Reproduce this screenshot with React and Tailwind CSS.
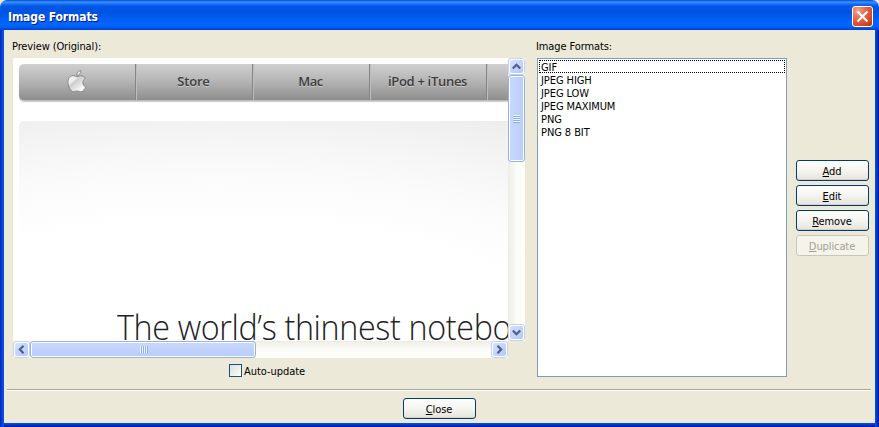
import React from "react";

const ui = "font-['DejaVu_Sans_Condensed','DejaVu_Sans',sans-serif] [font-stretch:condensed]";

function Chevron({ className = "" }) {
  return (
    <svg viewBox="0 0 9 9" className={`h-[9px] w-[9px] ${className}`} fill="none" stroke="#4d6185" strokeWidth="2.2">
      <path d="M0.8 6.5 L4.5 2.8 L8.2 6.5" />
    </svg>
  );
}

function ArrowButton({ turn }) {
  return (
    <div className="h-[17px] w-[17px] shrink-0 rounded-[3px] border border-[#c3d3f5] bg-white p-px">
      <div className="flex h-full w-full items-center justify-center rounded-[2px] bg-linear-to-br from-[#d4e0fe] to-[#b3c8f9]">
        <Chevron className={turn} />
      </div>
    </div>
  );
}

function PushButton({ first, rest, disabled }) {
  return (
    <button
      className={`flex h-[21px] w-[73px] items-center justify-center rounded-[3px] border pt-[2px] pr-px text-[11px] leading-[13px] ${
        disabled
          ? "border-[#c9c7ba] bg-[#f5f4ea] text-[#a1a192]"
          : "border-[#003c74] bg-linear-to-b from-white via-[#f5f4ef] to-[#e6e3db] text-black shadow-[inset_0_-1px_0_#d6d0c5]"
      }`}
    >
      <span className="tracking-[-0.1px] whitespace-nowrap">
        <span className="underline underline-offset-1">{first}</span>
        {rest}
      </span>
    </button>
  );
}

function AppleMark() {
  return (
    <svg width="20" height="24" viewBox="0 0 20 24">
      <defs>
        <linearGradient id="mark" x1="0" y1="0" x2="0.7" y2="1">
          <stop offset="0" stopColor="#ffffff" />
          <stop offset="0.46" stopColor="#ececec" />
          <stop offset="0.54" stopColor="#cdcdcd" />
          <stop offset="1" stopColor="#ffffff" />
        </linearGradient>
      </defs>
      <path
        d="M10.2 6.9 C9 6.8 8 5.7 6 5.7 C3 5.7 1 8.4 1 12.2 C1 16.4 3.7 21.7 6.4 21.7 C7.8 21.7 8.5 20.9 10 20.9 C11.5 20.9 12.1 21.7 13.7 21.7 C15.8 21.7 17.9 18.9 18.6 16.9 C16.8 16.1 15.9 14.7 15.9 12.6 C15.9 10.8 16.7 9.4 18.2 8.5 C17.2 6.7 15.6 5.7 13.8 5.7 C12.2 5.7 11.2 6.8 10.2 6.9 Z M9.8 5.4 C9.6 3 11.4 0.9 13.8 0.5 C14.2 3 12.2 5.4 9.8 5.4 Z"
        fill="url(#mark)"
        stroke="#6f6f6f"
        strokeWidth="0.7"
      />
    </svg>
  );
}

const cell =
  "flex h-full w-[117px] shrink-0 items-center justify-center border-r border-[#858585] shadow-[1px_0_0_#bdbdbd] pr-px pb-px text-[13px] font-semibold whitespace-nowrap text-[#3e3e3e] [text-shadow:0_1px_0_#c9c9c9] font-['Open_Sans',sans-serif] [font-stretch:normal]";

function Preview() {
  return (
    <div className="h-[283px] w-[495px] overflow-hidden bg-white pt-[6px] pl-[6px]">
      <div className="flex h-[37px] w-[600px] rounded-[5px] border-b border-[#bbb] bg-linear-to-b from-[#d0d0d0] via-[#b3b3b3] to-[#8e8e8e] shadow-[0_1px_1px_#ccc]">
        <div className={cell}>
          <AppleMark />
        </div>
        <div className={cell}><span className="tracking-[-0.2px]">Store</span></div>
        <div className={cell}><span className="tracking-[-0.5px]">Mac</span></div>
        <div className={cell}><span className="tracking-[-0.3px]">iPod + iTunes</span></div>
      </div>
      <div className="mt-[20px] h-[230px] w-[800px] rounded-tl-[5px] bg-[radial-gradient(ellipse_600px_230px_at_200px_230px,#ffffff_57%,#fbfbfb_76%,#f7f7f7_88%,#f1f1f1_102%,#ececec_114%)] pt-[183px] pl-[98px]">
        <div className="origin-left scale-x-[0.95] text-[34px] leading-[46px] font-light tracking-[-0.37px] whitespace-nowrap text-[#222] font-['Open_Sans',sans-serif] [font-stretch:normal]">
          The world’s thinnest notebo
        </div>
      </div>
    </div>
  );
}

const formats = ["GIF", "JPEG HIGH", "JPEG LOW", "JPEG MAXIMUM", "PNG", "PNG 8 BIT"];

export default function App() {
  return (
    <div className="h-[427px] w-[879px] bg-[#ece9d8]">
      <div className={`flex h-[427px] w-[879px] flex-col overflow-hidden rounded-t-[7px] bg-[#ece9d8] text-[11px] leading-[13px] text-black ${ui}`}>
        <div className="flex h-[30px] shrink-0 items-center justify-between bg-[linear-gradient(#0049d4_0px,#3c91ff_2px,#1b71f5_4px,#0058e8_6px,#0053e0_12px,#005ef5_19px,#0067ff_25px,#0060f8_27px,#003dd0_30px)] pt-[3px] pr-[6px] pl-[8px]">
          <div className="pt-[2px] text-[12px] leading-[15px] font-bold tracking-[-0.1px] whitespace-nowrap text-white [text-shadow:1px_1px_0_#0a1883]">Image Formats</div>
          <div className="flex h-[21px] w-[21px] items-center justify-center rounded-[3px] border border-white bg-[radial-gradient(circle_at_25%_20%,#f0a18c,#e5674a_40%,#d8431c_75%,#b93408)]">
            <svg width="13" height="13" viewBox="0 0 13 13" stroke="white" strokeWidth="2.2" fill="none">
              <path d="M1.5 1.5 L11.5 11.5 M11.5 1.5 L1.5 11.5" />
            </svg>
          </div>
        </div>

        <div className="flex h-[397px] w-full">
          <div className="w-[4px] shrink-0 bg-linear-to-r from-[#0016b0] via-[#0046e0] to-[#0855dd]" />
          <div className="flex w-[871px] shrink-0 flex-col">
            <div className="flex h-[359px] shrink-0 pl-[9px]">
              <div className="w-[512px] shrink-0">
                <div className="flex h-[28px] items-end pb-[5px] pl-0"><span className="-ml-px tracking-[-0.12px]">Preview (Original):</span></div>
                <div className="flex">
                  <Preview />
                  <div className="flex h-[283px] w-[17px] flex-col bg-linear-to-r from-[#eeede5] via-[#fbfbf8] to-[#fefefb]">
                    <ArrowButton turn="" />
                    <div className="flex h-[87px] w-[17px] flex-col items-center justify-center gap-px rounded-[3px] border border-[#98b3e8] bg-linear-to-r from-[#c9d8fc] to-[#b9cdfb] shadow-[inset_0_0_0_1px_white]">
                      {[0, 1, 2, 3].map((i) => (
                        <div key={i} className="h-px w-[7px] bg-[#eef4fe] shadow-[0_1px_0_#8cb0f8]" />
                      ))}
                    </div>
                    <div className="grow" />
                    <ArrowButton turn="rotate-180" />
                  </div>
                </div>
                <div className="flex h-[17px] w-[495px] bg-linear-to-b from-[#eeede5] via-[#fbfbf8] to-[#fefefb]">
                  <ArrowButton turn="-rotate-90" />
                  <div className="flex h-[17px] w-[226px] items-center justify-center gap-px rounded-[3px] border border-[#98b3e8] bg-linear-to-b from-[#c9d8fc] to-[#b9cdfb] shadow-[inset_0_0_0_1px_white]">
                    {[0, 1, 2, 3].map((i) => (
                      <div key={i} className="h-[7px] w-px bg-[#eef4fe] shadow-[1px_0_0_#8cb0f8]" />
                    ))}
                  </div>
                  <div className="grow" />
                  <ArrowButton turn="rotate-90" />
                </div>
                <div className="flex items-start gap-[3px] pt-[6px] pl-[216px]">
                  <div className="h-[13px] w-[13px] border border-[#1c5180] bg-linear-to-br from-[#dcdcd7] to-white" />
                  <span className="-ml-px pt-px tracking-[-0.05px]">Auto-update</span>
                </div>
              </div>

              <div className="ml-[12px] w-[250px] shrink-0">
                <div className="flex h-[28px] items-end pb-[5px]"><span className="-ml-px tracking-[-0.1px]">Image Formats:</span></div>
                <div className="h-[319px] w-[250px] border border-[#7f9db9] bg-white p-px">
                  {formats.map((f, i) => (
                    <div
                      key={f}
                      className={`flex h-[13px] items-center pt-[2px] pl-[2px] whitespace-nowrap tracking-[-0.08px] ${
                        i === 0 ? "outline-1 -outline-offset-1 outline-dotted outline-black" : ""
                      }`}
                    >
                      {f}
                    </div>
                  ))}
                </div>
              </div>

              <div className="ml-[9px] flex flex-col gap-[4px] pt-[130px]">
                <PushButton first="A" rest="dd" />
                <PushButton first="E" rest="dit" />
                <PushButton first="R" rest="emove" />
                <PushButton first="D" rest="uplicate" disabled />
              </div>
            </div>
            <div className="mr-[4px] ml-[3px] h-[2px] border-t border-b border-t-[#aca899] border-b-white" />
            <div className="flex h-[32px] pt-[7px] pl-[399px]">
              <PushButton first="C" rest="lose" />
            </div>
            <div className="h-[4px] bg-linear-to-b from-[#0855dd] via-[#0036d0] to-[#00129a]" />
          </div>
          <div className="w-[4px] shrink-0 bg-linear-to-r from-[#0855dd] via-[#0036d0] to-[#00129a]" />
        </div>
      </div>
    </div>
  );
}
